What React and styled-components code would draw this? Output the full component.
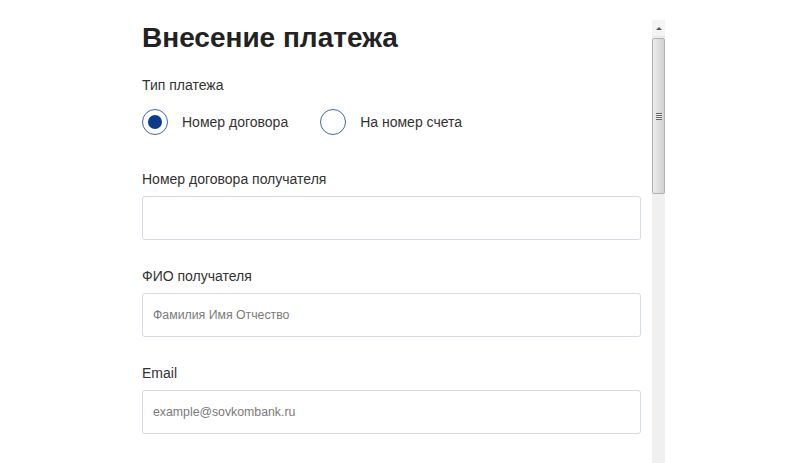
import React from 'react';
import styled, { createGlobalStyle } from 'styled-components';

const GlobalStyle = createGlobalStyle`
  html, body {
    margin: 0;
    padding: 0;
    background: #fff;
  }
  body {
    font-family: "Liberation Sans", Arial, sans-serif;
    color: #333;
  }
`;

const Page = styled.div`
  display: flex;
  align-items: flex-start;
  gap: 11px;
  height: 463px;
  padding-left: 142px;
  overflow: hidden;
`;

const Form = styled.form`
  width: 499px;
  padding-top: 21px;
  display: flex;
  flex-direction: column;
`;

const Title = styled.h1`
  margin: 0 0 21px;
  font-size: 28px;
  line-height: 34px;
  font-weight: 700;
  color: #222;
`;

const Label = styled.div`
  font-size: 14px;
  line-height: 18px;
  color: #333;
  margin-bottom: ${(p) => p.$gap || 8}px;
`;

const RadioRow = styled.div`
  display: flex;
  align-items: center;
  gap: 32px;
  margin-bottom: 35px;
`;

const RadioOption = styled.label`
  display: flex;
  align-items: center;
  gap: 14px;
  font-size: 14px;
  color: #333;
  cursor: pointer;
`;

const RadioCircle = styled.span`
  box-sizing: border-box;
  width: 26px;
  height: 26px;
  border-radius: 50%;
  border: 1.5px solid #3f65b3;
  display: flex;
  align-items: center;
  justify-content: center;

  &::after {
    content: '';
    display: ${(p) => (p.$checked ? 'block' : 'none')};
    width: 14px;
    height: 14px;
    border-radius: 50%;
    background: #0b3a8e;
  }
`;

const Field = styled.div`
  display: flex;
  flex-direction: column;
  margin-bottom: 27px;
`;

const Input = styled.input`
  box-sizing: border-box;
  width: 100%;
  height: 44px;
  border: 1px solid #d3dbe6;
  border-radius: 3px;
  padding: 0 10px;
  font-family: "Liberation Sans", Arial, sans-serif;
  font-size: 12.3px;
  color: #333;
  outline: none;

  &::placeholder {
    color: #7a7a7a;
  }
`;

const Scrollbar = styled.div`
  margin-top: 20px;
  width: 13px;
  height: 443px;
  display: flex;
  flex-direction: column;
  background: #f0f0f0;
`;

const ArrowButton = styled.div`
  height: 16px;
  display: flex;
  align-items: center;
  justify-content: center;
  background: #f4f4f4;
  border-bottom: 1px solid #e4e4e4;

  &::after {
    content: '';
    width: 0;
    height: 0;
    border-left: 3px solid transparent;
    border-right: 3px solid transparent;
    border-bottom: 3px solid #555;
  }
`;

const Thumb = styled.div`
  box-sizing: border-box;
  margin-top: 1px;
  height: 156px;
  border: 1px solid #b0b0b0;
  border-radius: 2px;
  background: linear-gradient(to right, #ececec, #dedede 50%, #d2d2d2);
  display: flex;
  align-items: center;
  justify-content: center;
`;

const Grip = styled.span`
  width: 6px;
  height: 7px;
  background: repeating-linear-gradient(
    to bottom,
    #666 0,
    #666 1px,
    #eee 1px,
    #eee 2px
  );
`;

const App = () => {
  return (
    <>
      <GlobalStyle />
      <Page>
        <Form>
          <Title>Внесение платежа</Title>
          <Label $gap={15}>Тип платежа</Label>
          <RadioRow>
            <RadioOption>
              <RadioCircle $checked />
              Номер договора
            </RadioOption>
            <RadioOption>
              <RadioCircle />
              На номер счета
            </RadioOption>
          </RadioRow>
          <Field>
            <Label>Номер договора получателя</Label>
            <Input type="text" />
          </Field>
          <Field>
            <Label>ФИО получателя</Label>
            <Input type="text" placeholder="Фамилия Имя Отчество" />
          </Field>
          <Field>
            <Label>Email</Label>
            <Input type="email" placeholder="example@sovkombank.ru" />
          </Field>
        </Form>
        <Scrollbar>
          <ArrowButton />
          <Thumb>
            <Grip />
          </Thumb>
        </Scrollbar>
      </Page>
    </>
  );
};

export default App;
